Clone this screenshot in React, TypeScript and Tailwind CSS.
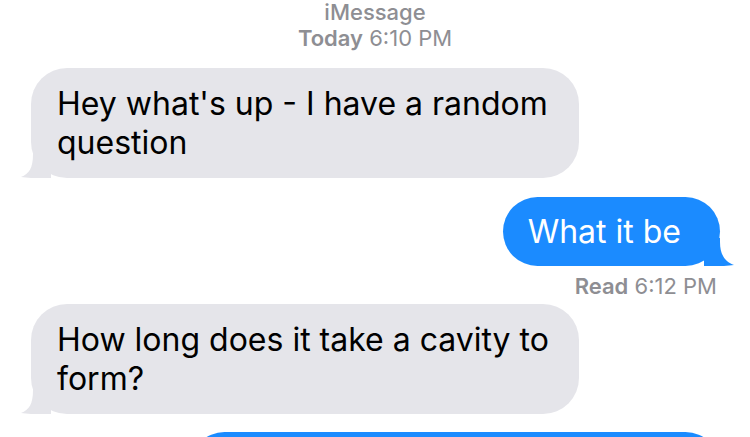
const font = { fontFamily: 'Inter, "Liberation Sans", sans-serif' };

function TailLeft() {
  return (
    <svg className="absolute bottom-0 left-[-10px]" width="30" height="28" viewBox="0 0 30 28">
      <path d="M30 0 L30 28 L20 28 C14 28 6 28 0 27 C8 24 12 18 12 4 L12 0 Z" fill="#e5e5ea" />
    </svg>
  );
}

function TailRight() {
  return (
    <svg className="absolute bottom-0 right-[-14px]" width="30" height="28" viewBox="0 0 30 28">
      <path d="M0 0 L0 28 L10 28 C16 28 24 28 30 27 C22 24 16 18 16 4 L16 0 Z" fill="#1b8bff" />
    </svg>
  );
}

function Incoming({ lines }: { lines: string[] }) {
  return (
    <div className="relative self-start ml-[31px] w-[548px] rounded-[36px] bg-[#e5e5ea] pl-[26px] pr-4 py-[16px]">
      <TailLeft />
      <div className="relative text-[32px] leading-[39px] text-black">
        {lines.map((l) => (
          <div key={l}>{l}</div>
        ))}
      </div>
    </div>
  );
}

export default function App() {
  return (
    <div className="w-[750px] h-[437px] overflow-hidden bg-white flex flex-col" style={font}>
      <div className="-mt-[1px] flex flex-col items-center text-[#8e8e93] text-[22px] leading-[26px]">
        <div className="font-medium">iMessage</div>
        <div>
          <span className="font-semibold">Today</span> 6:10 PM
        </div>
      </div>

      <div className="mt-[17px] flex flex-col">
        <Incoming lines={["Hey what's up - I have a random", 'question']} />
      </div>

      <div className="mt-[19px] self-end mr-[30px] relative rounded-[36px] bg-[#1b8bff] pl-[25px] pr-[39px] py-[15px]">
        <TailRight />
        <div className="relative text-[32px] leading-[39px] text-white">What it be</div>
      </div>

      <div className="self-end mr-[33px] mt-[7px] text-[22px] leading-[26px] text-[#8e8e93]">
        <span className="font-semibold">Read</span> 6:12 PM
      </div>

      <div className="mt-[5px] flex flex-col">
        <Incoming lines={['How long does it take a cavity to', 'form?']} />
      </div>

      <div className="mt-[18px] self-end mr-[30px] w-[530px] h-[69px] shrink-0 rounded-[36px] bg-[#1b8bff]" />
    </div>
  );
}
